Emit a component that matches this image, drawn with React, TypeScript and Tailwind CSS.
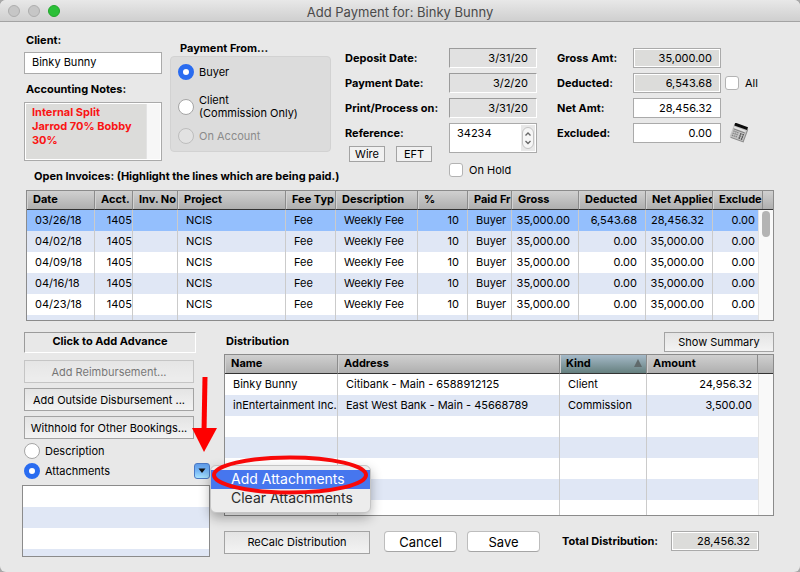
import { useState } from 'react';

const invoices = [
  { date: '03/26/18', deducted: '6,543.68', net: '28,456.32' },
  { date: '04/02/18', deducted: '0.00', net: '35,000.00' },
  { date: '04/09/18', deducted: '0.00', net: '35,000.00' },
  { date: '04/16/18', deducted: '0.00', net: '35,000.00' },
  { date: '04/23/18', deducted: '0.00', net: '35,000.00' },
];

const distribution = [
  { name: 'Binky Bunny', address: 'Citibank - Main - 6588912125', kind: 'Client', amount: '24,956.32' },
  { name: 'inEntertainment Inc.', address: 'East West Bank - Main - 45668789', kind: 'Commission', amount: '3,500.00' },
  { name: '', address: '', kind: '', amount: '' },
  { name: '', address: '', kind: '', amount: '' },
  { name: '', address: '', kind: '', amount: '' },
  { name: '', address: '', kind: '', amount: '' },
  { name: '', address: '', kind: '', amount: '' },
];

const th = 'h-[19px] overflow-hidden whitespace-nowrap border-b border-[#333] border-r border-r-[#8c8c8c] pb-0.5 pl-1.5 text-left font-bold shadow-[inset_1px_0_0_#d2d2d2]';
const td = 'h-[21px] overflow-hidden whitespace-nowrap border-r border-[#cbcbcb] pb-0.5 pl-2';
const num = 'h-[21px] overflow-hidden whitespace-nowrap border-r border-[#cbcbcb] pr-2 pb-0.5 text-right';
const numTight = 'h-[21px] overflow-hidden whitespace-nowrap border-r border-[#cbcbcb] pb-0.5 text-right';
const flatButton = 'block w-full whitespace-nowrap border border-[#a3a3a3] bg-gradient-to-b from-[#e4e4e4] to-[#f3f3f3] text-center';

function Radio({ id, name, label, checked, disabled, onChange }: {
  id: string;
  name: string;
  label: React.ReactNode;
  checked: boolean;
  disabled?: boolean;
  onChange?: () => void;
}) {
  return (
    <div className="flex items-center gap-[5px]">
      <input
        id={id}
        type="radio"
        name={name}
        checked={checked}
        disabled={disabled}
        onChange={() => onChange?.()}
        className="h-4 w-4 shrink-0 appearance-none rounded-full border border-[#a5a5a5] bg-white checked:border-[5px] checked:border-[#2a6cf0] disabled:border-[#bdbdbd] disabled:bg-[#e2e2e2]"
      />
      <label htmlFor={id} className={disabled ? 'leading-[13px] text-[#8b8b8b]' : 'leading-[13px]'}>{label}</label>
    </div>
  );
}

function CheckBox({ id, label }: { id: string; label: string }) {
  return (
    <div className="flex items-center gap-1.5">
      <input id={id} type="checkbox" className="h-3.5 w-3.5 appearance-none rounded-[3px] border border-[#b3b3b3] bg-white checked:bg-[#2a6cf0]" />
      <label htmlFor={id}>{label}</label>
    </div>
  );
}

function DateField({ id, value }: { id: string; value: string }) {
  return (
    <input
      id={id}
      defaultValue={value}
      className="h-5 w-full border border-t-[#9b9b9b] border-r-white border-b-white border-l-[#9b9b9b] bg-[#e1e1e1] pr-2 text-right outline-none"
    />
  );
}

function AmountField({ id, value, locked }: { id: string; value: string; locked?: boolean }) {
  return (
    <input
      id={id}
      defaultValue={value}
      readOnly={locked}
      className={`h-5 w-[88px] border border-[#aaa] pr-2 text-right outline-none ${locked ? 'bg-[#dcdcda] shadow-[inset_0_0_0_1px_#fff]' : 'bg-white'}`}
    />
  );
}

function Calculator() {
  return (
    <svg width="20" height="20" viewBox="0 0 20 20" aria-hidden="true">
      <g transform="rotate(20 10 10)">
        <rect x="3.500" y="3.500" width="14" height="14" fill="#8a8a8a" />
        <rect x="2.500" y="2.500" width="14" height="14" fill="#c4c4c4" />
        <rect x="3" y="1.500" width="13.500" height="3" fill="#0c0c0c" />
        <rect x="3.500" y="5.500" width="12" height="1.500" fill="#e6e6e6" />
        <path d="M3.500 8h12" stroke="#777" strokeWidth=".8" />
        <path d="M4 10h6M4 12.200h6M4 14.400h6" stroke="#858585" strokeWidth="1.300" strokeDasharray="1.400 .6" />
        <path d="M12 9.500v6M14.500 9.500v6" stroke="#4a4a4a" strokeWidth="1.400" strokeDasharray="1.600 .6" />
      </g>
    </svg>
  );
}

export default function App() {
  const [payer, setPayer] = useState('buyer');
  const [panel, setPanel] = useState('attachments');

  return (
    <div className="min-h-screen bg-[#a8a8a8] font-['Inter','Liberation_Sans',sans-serif] text-[11px] leading-4 text-black">
      <main className="flex min-h-screen flex-col overflow-hidden rounded-md bg-[#e8e8e8]">
        <header className="flex h-[22px] shrink-0 items-center border-b border-[#a3a3a3] bg-gradient-to-b from-[#e8e8e8] to-[#cfcfcf] px-2">
          <div className="flex w-[60px] gap-2">
            <button type="button" aria-label="Close" className="h-3 w-3 rounded-full border border-[#adadad] bg-[#c6c6c6]" />
            <button type="button" aria-label="Minimize" className="h-3 w-3 rounded-full border border-[#adadad] bg-[#c6c6c6]" />
            <button type="button" aria-label="Zoom" className="h-3 w-3 rounded-full border border-[#22a52b] bg-[#2bc038]" />
          </div>
          <h1 className="flex-1 pt-0.5 pr-[60px] text-center text-[13px] text-[#4a4a4a]">Add Payment for: Binky Bunny</h1>
        </header>

        <section className="flex items-start pt-2.5 pl-6">
          <div className="flex w-[138px] shrink-0 flex-col">
            <label htmlFor="client" className="pl-0.5 font-bold">Client:</label>
            <input id="client" defaultValue="Binky Bunny" className="mt-1 h-[22px] w-full border border-[#aaa] bg-white pb-0.5 pl-[7px] outline-none" />
            <label htmlFor="notes" className="mt-[7px] pl-0.5 font-bold">Accounting Notes:</label>
            <div className="mt-[5px] flex h-[59px] border border-[#aaa] bg-white p-px">
              <textarea
                id="notes"
                defaultValue="Internal Split Jarrod 70% Bobby 30%"
                className="min-w-0 flex-1 resize-none overflow-hidden bg-[#dcdcda] pt-px pr-2.5 pl-1.5 leading-[14px] font-bold text-[#fa1414] outline-none"
              />
              <div className="w-3.5 border-l border-[#e3e3e3] bg-[#f7f7f7]" />
            </div>
          </div>

          <fieldset className="mt-2 ml-2 w-[161px] shrink-0">
            <legend className="pl-2.5 font-bold">Payment From...</legend>
            <div className="flex h-24 flex-col rounded border border-[#d2d2d2] bg-[#dcdcdc] pt-[7px] pl-[7px]">
              <Radio id="buyer" name="payer" label="Buyer" checked={payer === 'buyer'} onChange={() => setPayer('buyer')} />
              <div className="mt-3.5">
                <Radio id="payer-client" name="payer" label={<>Client<br />(Commission Only)</>} checked={payer === 'client'} onChange={() => setPayer('client')} />
              </div>
              <div className="mt-2">
                <Radio id="account" name="payer" label="On Account" checked={false} disabled />
              </div>
            </div>
          </fieldset>

          <div className="mt-4 ml-3.5 flex w-[192px] shrink-0">
            <div className="flex w-[104px] shrink-0 flex-col gap-[5px] font-bold">
              <label htmlFor="deposit" className="h-5 leading-5">Deposit Date:</label>
              <label htmlFor="payment" className="h-5 leading-5">Payment Date:</label>
              <label htmlFor="process" className="h-5 leading-5 whitespace-nowrap">Print/Process on:</label>
              <label htmlFor="reference" className="h-5 leading-5">Reference:</label>
              <div className="-mt-0.5 flex gap-[11px] pl-1 font-normal">
                <button type="button" className="h-4 w-9 border border-[#a3a3a3] bg-[#f1f1f1] leading-3">Wire</button>
                <button type="button" className="h-4 w-9 border border-[#a3a3a3] bg-[#f1f1f1] leading-3">EFT</button>
              </div>
            </div>
            <div className="flex min-w-0 flex-1 flex-col gap-[5px]">
              <DateField id="deposit" value="3/31/20" />
              <DateField id="payment" value="3/2/20" />
              <DateField id="process" value="3/31/20" />
              <div className="flex h-[30px] border border-[#aaa] bg-white p-px">
                <input id="reference" defaultValue="34234" className="min-w-0 flex-1 pb-2.5 pl-1.5 outline-none" />
                <div className="flex w-3.5 shrink-0 items-center justify-center bg-[#e8e8e8]">
                  <button type="button" aria-label="Step reference" className="flex h-[22px] w-3 items-center justify-center rounded-md border border-[#c3c3c3] bg-[#f6f6f6]">
                    <svg className="shrink-0" width="8" height="16" viewBox="0 0 8 16" fill="none" stroke="#666" strokeWidth="1.300">
                      <path d="M1.500 5.500 4 3l2.500 2.500M1.500 11 4 13.500 6.500 11" />
                    </svg>
                  </button>
                </div>
              </div>
              <div className="mt-1">
                <CheckBox id="hold" label="On Hold" />
              </div>
            </div>
          </div>

          <div className="mt-4 ml-5 grid shrink-0 grid-cols-[76px_92px_auto] items-center gap-y-[5px]">
            <label htmlFor="gross" className="font-bold">Gross Amt:</label>
            <AmountField id="gross" value="35,000.00" locked />
            <span />
            <label htmlFor="deducted" className="font-bold">Deducted:</label>
            <AmountField id="deducted" value="6,543.68" locked />
            <CheckBox id="all" label="All" />
            <label htmlFor="net" className="font-bold">Net Amt:</label>
            <AmountField id="net" value="28,456.32" />
            <span />
            <label htmlFor="excluded" className="font-bold">Excluded:</label>
            <AmountField id="excluded" value="0.00" />
            <button type="button" aria-label="Calculator" className="ml-1 h-5 w-5"><Calculator /></button>
          </div>
        </section>

        <h2 className="-mt-2.5 pl-[34px] font-bold">Open Invoices: (Highlight the lines which are being paid.)</h2>

        <div className="mx-[26px] mt-1.5 h-[131px] shrink-0 overflow-hidden border border-[#8b8b8b] bg-white">
          <table className="w-full table-fixed border-separate border-spacing-0">
            <colgroup>
              <col className="w-[68px]" />
              <col className="w-[38px]" />
              <col className="w-[45px]" />
              <col />
              <col className="w-[50px]" />
              <col className="w-[82px]" />
              <col className="w-[50px]" />
              <col className="w-[44px]" />
              <col className="w-[67px]" />
              <col className="w-[67px]" />
              <col className="w-[67px]" />
              <col className="w-[45px]" />
              <col className="w-[15px]" />
            </colgroup>
            <thead>
              <tr className="bg-gradient-to-b from-[#d0d0d0] to-[#adadad]">
                <th className={th}>Date</th>
                <th className={th}>Acct.</th>
                <th className={th}>Inv. No</th>
                <th className={th}>Project</th>
                <th className={th}>Fee Typ</th>
                <th className={th}>Description</th>
                <th className={th}>%</th>
                <th className={th}>Paid Fr</th>
                <th className={th}>Gross</th>
                <th className={th}>Deducted</th>
                <th className={th}>Net Applied</th>
                <th colSpan={2} className="border-b border-[#333] p-0 text-left font-bold">
                  <div className="mr-2.5 h-[18px] overflow-hidden border-r border-[#8c8c8c] pl-1.5 leading-4 shadow-[inset_1px_0_0_#d2d2d2]">Exclude</div>
                </th>
              </tr>
            </thead>
            <tbody>
              {invoices.map((row, i) => (
                <tr key={row.date} className={i === 0 ? 'bg-[#94bffd]' : i % 2 ? 'bg-[#e0e7f5]' : 'bg-white'}>
                  <td className={td}>{row.date}</td>
                  <td className={numTight}>1405</td>
                  <td className={td} />
                  <td className={td}>NCIS</td>
                  <td className={td}>Fee</td>
                  <td className={td}>Weekly Fee</td>
                  <td className={num}>10</td>
                  <td className={td}>Buyer</td>
                  <td className={num}>35,000.00</td>
                  <td className={num}>{row.deducted}</td>
                  <td className={num}>{row.net}</td>
                  <td className="pr-[3px] pb-0.5 text-right">0.00</td>
                  {i === 0 && (
                    <td rowSpan={6} className="border-l border-[#e3e3e3] bg-[#f9f9f9] p-0 align-top">
                      <div className="mt-px ml-[3px] h-[26px] w-2 rounded-full bg-[#b4b4b4]" />
                    </td>
                  )}
                </tr>
              ))}
              <tr className="bg-[#e0e7f5]">
                {Array.from({ length: 12 }, (_, i) => (
                  <td key={i} className={i < 11 ? td : 'h-[21px]'} />
                ))}
              </tr>
            </tbody>
          </table>
        </div>

        <section className="mt-[11px] flex pr-[26px] pl-[22px]">
          <div className="flex w-[188px] shrink-0 flex-col">
            <div className="pl-0.5">
              <button type="button" className="block h-[21px] w-[172px] border border-t-[#9b9b9b] border-r-white border-b-white border-l-[#9b9b9b] pb-1 text-center leading-4 font-bold">Click to Add Advance</button>
              <div className="mt-[7px] flex w-[170px] flex-col gap-[5px]">
                <button type="button" disabled className={`${flatButton} h-[23px] opacity-50`}>Add Reimbursement...</button>
                <button type="button" className={`${flatButton} h-[23px]`}>Add Outside Disbursement ...</button>
                <button type="button" className={`${flatButton} h-[23px]`}>Withhold for Other Bookings...</button>
              </div>
              <div className="mt-1">
                <Radio id="description" name="panel" label="Description" checked={panel === 'description'} onChange={() => setPanel('description')} />
              </div>
            </div>
            <div className="mt-1 flex items-center justify-between pl-0.5">
              <Radio id="attachments" name="panel" label="Attachments" checked={panel === 'attachments'} onChange={() => setPanel('attachments')} />
              <div className="relative z-10">
                <button type="button" aria-label="Attachment actions" className="flex h-4 w-4 items-center justify-center rounded-[3px] border border-[#4a78c4] bg-gradient-to-b from-[#5f9be8] via-[#78b7f5] to-[#a9e4ff]">
                  <svg width="8" height="6" viewBox="0 0 8 6"><path d="M.5.5h7L4 5z" fill="#111" /></svg>
                </button>
                <ul role="menu" className="absolute top-0.5 left-4 w-[161px] rounded-md border border-[#c5c5c5] bg-[#ececec] py-1 text-sm text-[#2b2b2b] shadow-[0_5px_12px_rgba(0,0,0,0.3)]">
                  <li><button type="button" role="menuitem" className="block h-[19px] w-full bg-[#4676ee] pb-0.5 pl-5 text-left leading-[17px] text-white">Add Attachments</button></li>
                  <li><button type="button" role="menuitem" className="block h-[19px] w-full pb-0.5 pl-5 text-left leading-[17px]">Clear Attachments</button></li>
                </ul>
                <svg className="pointer-events-none absolute -top-[86px] -left-1 max-w-none" width="184" height="124" viewBox="0 0 184 124" fill="none">
                  <path d="M15 0 14 55" stroke="#fe0000" strokeWidth="5" />
                  <path d="M2 51h25L14 75z" fill="#fe0000" />
                  <ellipse cx="100" cy="98" rx="76" ry="17.500" stroke="#f80808" strokeWidth="4" />
                </svg>
              </div>
            </div>
            <div className="mt-1.5 h-[72px] overflow-hidden border border-[#8b8b8b] bg-white">
              <div className="h-[21px]" />
              <div className="h-[21px] bg-[#e0e7f5]" />
              <div className="h-[21px]" />
              <div className="h-[21px] bg-[#e0e7f5]" />
            </div>
          </div>

          <div className="ml-3.5 min-w-0 flex-1">
            <div className="flex items-start justify-between">
              <h2 className="pt-px pl-0.5 font-bold">Distribution</h2>
              <button type="button" className="h-5 w-[110px] border border-[#a3a3a3] bg-gradient-to-b from-[#e4e4e4] to-[#f3f3f3]">Show Summary</button>
            </div>
            <div className="mt-0.5 h-[162px] overflow-hidden border border-[#8b8b8b] bg-white">
              <table className="w-full table-fixed border-separate border-spacing-0">
                <colgroup>
                  <col className="w-[113px]" />
                  <col />
                  <col className="w-[87px]" />
                  <col className="w-[111px]" />
                  <col className="w-[15px]" />
                </colgroup>
                <thead>
                  <tr className="bg-gradient-to-b from-[#d0d0d0] to-[#adadad]">
                    <th className={th}>Name</th>
                    <th className={th}>Address</th>
                    <th className={`${th} bg-gradient-to-b from-[#a6bac9] to-[#66807f]`}>
                      <span className="flex items-center justify-between pr-1">
                        Kind
                        <svg width="8" height="8" viewBox="0 0 8 8"><path d="M4 0l4 8H0z" fill="#606a6c" /></svg>
                      </span>
                    </th>
                    <th className={th}>Amount</th>
                    <th className="border-b border-[#333] p-0" />
                  </tr>
                </thead>
                <tbody>
                  {distribution.map((row, i) => (
                    <tr key={i} className={i % 2 ? 'bg-[#e0e7f5]' : 'bg-white'}>
                      <td className={td}>{row.name}</td>
                      <td className={td}>{row.address}</td>
                      <td className={td}>{row.kind}</td>
                      <td className="h-[21px] pr-1.5 pb-0.5 text-right">{row.amount}</td>
                      {i === 0 && <td rowSpan={7} className="border-l border-[#e3e3e3] bg-[#f9f9f9]" />}
                    </tr>
                  ))}
                </tbody>
              </table>
            </div>
            <div className="mt-[15px] flex items-start">
              <button type="button" className="h-[23px] w-[146px] border border-[#a3a3a3] bg-gradient-to-b from-[#e4e4e4] to-[#f3f3f3] pb-0.5">ReCalc Distribution</button>
              <button type="button" className="ml-3.5 h-[21px] w-[73px] rounded border border-[#bdbdbd] border-b-[#a5a5a5] bg-white text-[13px]">Cancel</button>
              <button type="button" className="ml-2.5 h-[21px] w-[73px] rounded border border-[#bdbdbd] border-b-[#a5a5a5] bg-white text-[13px]">Save</button>
              <label htmlFor="total" className="ml-[22px] w-[109px] leading-5 font-bold whitespace-nowrap">Total Distribution:</label>
              <AmountField id="total" value="28,456.32" locked />
            </div>
          </div>
        </section>
      </main>
    </div>
  );
}
